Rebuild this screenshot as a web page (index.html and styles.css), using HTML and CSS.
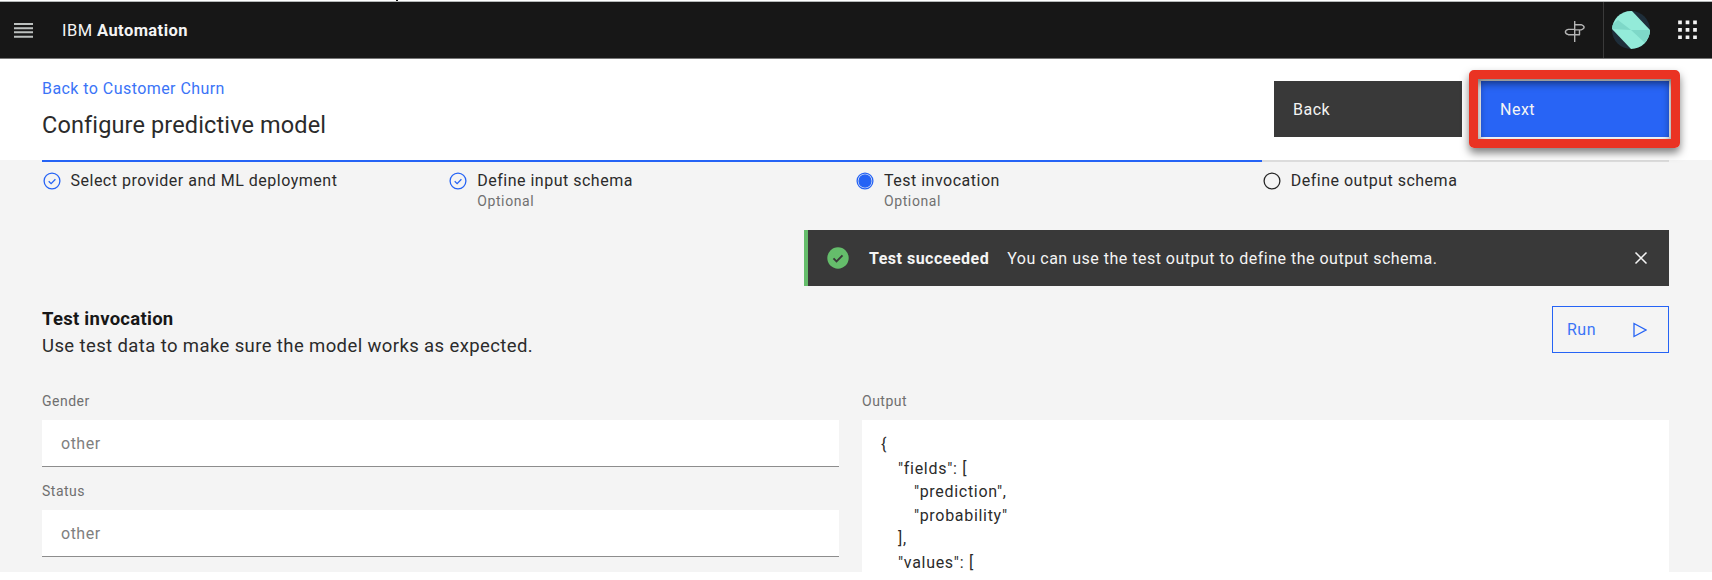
FILE: index.html
```
<!DOCTYPE html>
<html lang="en">
<head>
<meta charset="utf-8">
<title>Configure predictive model</title>
<link rel="stylesheet" href="styles.css">
</head>
<body>
<i class="speck"></i>
<header class="topbar">
  <svg class="menu" width="20" height="18" viewBox="0 0 20 18"><path d="M0 3h19M0 7.300h19M0 11.300h19M0 15.700h19" stroke="#bcc0bf" stroke-width="1.900"/></svg>
  <div class="brand">IBM <b>Automation</b></div>
  <div class="tools">
    <svg class="sign" width="22" height="24" viewBox="0 0 22 24" fill="none" stroke="#b4b4b4" stroke-width="1.400" stroke-linejoin="round"><path d="M11.700 3v21M11.700 6.700h6.500q2.900 1 2.900 2.600t-2.900 2.600h-6.500M11.700 11.400H5.300Q2.400 12.300 2.400 14t2.900 2.700h11.200v-4.800"/></svg>
    <div class="user"><svg width="38" height="38" viewBox="0 0 38 38"><defs><clipPath id="disc"><circle cx="19" cy="19" r="19"/></clipPath></defs><g clip-path="url(#disc)"><path fill="#1e2e3a" d="M0 0h38v38H0z"/><path fill="#93ebd9" d="M0 0h20l18 19v19H19L0 18z"/><path fill="#7ed8c8" d="M19 19 6 9 0 14v4zM19 19h19v4l-5 9z"/></g></svg></div>
    <svg class="apps" width="20" height="20" viewBox="0 0 20 20"><path d="M2 .5V20M9.500.5V20M17 .5V20" stroke="#f4f4f4" stroke-width="3.700" stroke-dasharray="3.700 3.750"/></svg>
  </div>
</header>
<section class="heading">
  <div class="titles"><a class="crumb">Back to Customer Churn</a><h1>Configure predictive model</h1></div>
  <div class="actions"><button class="btn back">Back</button><button class="btn next">Next<i class="frame"></i></button></div>
</section>
<main class="content">
  <ol class="steps">
    <li class="step"><svg class="dot" viewBox="0 0 18 18"><circle cx="9" cy="9" r="7.900"/><path d="m5.700 9.300 2.400 2.300 4.300-4.300"/></svg><p class="name">Select provider and ML deployment</p></li>
    <li class="step"><svg class="dot" viewBox="0 0 18 18"><circle cx="9" cy="9" r="7.900"/><path d="m5.700 9.300 2.400 2.300 4.300-4.300"/></svg><div><p class="name">Define input schema</p><p class="opt">Optional</p></div></li>
    <li class="step"><svg class="dot" viewBox="0 0 18 18"><circle cx="9" cy="9" r="7.900"/><circle cx="9" cy="9" r="6" class="fill"/></svg><div><p class="name">Test invocation</p><p class="opt">Optional</p></div></li>
    <li class="step todo"><svg class="dot" viewBox="0 0 18 18"><circle cx="9" cy="9" r="7.900"/></svg><p class="name">Define output schema</p></li>
  </ol>
  <div class="toast">
    <svg width="22" height="22" viewBox="0 0 22 22"><circle cx="11" cy="11" r="10.700" fill="#65bd6b"/><path d="m6.500 11.300 3 3 6-6" fill="none" stroke="#393939" stroke-width="1.900"/></svg>
    <b>Test succeeded</b><p>You can use the test output to define the output schema.</p>
    <svg class="close" width="14" height="14" viewBox="0 0 14 14"><path d="m1.500 1.500 11 11m0-11-11 11" stroke="#f4f4f4" stroke-width="1.500"/></svg>
  </div>
  <div class="intro">
    <div><h2>Test invocation</h2><p class="sub">Use test data to make sure the model works as expected.</p></div>
    <button class="run">Run<svg width="14" height="16" viewBox="0 0 14 16"><path d="M1 1.500v13L13 8z" fill="none" stroke="#2563f5" stroke-width="1.300"/></svg></button>
  </div>
  <div class="panes">
    <div class="form">
      <label class="label">Gender</label><div class="input">other</div>
      <label class="label">Status</label><div class="input">other</div>
    </div>
    <div class="out">
      <label class="label">Output</label>
      <div class="code"><p>{</p><p class="i1">"fields": [</p><p class="i2">"prediction",</p><p class="i2">"probability"</p><p class="i1">],</p><p class="i1">"values": [</p></div>
    </div>
  </div>
</main>
</body>
</html>
```
FILE: styles.css
```
* { box-sizing: border-box; margin: 0; padding: 0; }
body { width: 1712px; height: 580px; overflow: hidden; background: #fff; color: #2b2b2b; font-family: Roboto, "Noto Sans", sans-serif; font-size: 16px; letter-spacing: .5px; padding-top: 1px; }
button { font: inherit; letter-spacing: inherit; border: 0; text-align: left; }
.speck { position: absolute; left: 396px; top: 0; width: 2px; height: 1px; background: #111; }
.topbar { height: 58px; background: #171717; border-top: 1px solid #b5b8b8; border-bottom: 1px solid #777; display: flex; align-items: center; padding: 0 14px; color: #f4f4f4; }
.brand { margin-left: 28px; font-size: 16.500px; letter-spacing: .43px; }
.brand b { font-weight: 700; }
.tools { margin-left: auto; display: flex; align-items: center; height: 100%; }
.user { margin-left: 18px; padding-left: 8px; height: 100%; border-left: 1px solid #3a3a3a; display: flex; align-items: center; }
.apps { margin-left: 28px; }
.heading { height: 101px; padding: 0 43px 0 42px; display: flex; justify-content: space-between; }
.titles { padding-top: 19px; }
.crumb { display: block; color: #3b74f7; line-height: 22px; letter-spacing: .44px; }
h1 { font-weight: 400; font-size: 23.500px; line-height: 30px; margin-top: 10px; letter-spacing: .13px; }
.actions { display: flex; gap: 19px; padding-top: 22px; }
.btn { width: 188px; height: 56px; padding-left: 19px; color: #f4f4f4; }
.back { background: #393939; }
.next { background: #2864f5; position: relative; }
.frame { position: absolute; left: -12px; top: -11px; width: 211px; height: 78px; border: 9px solid #ea3323; border-radius: 5px; box-shadow: 0 5px 9px rgba(0, 0, 0, .5), inset 0 4px 9px rgba(0, 0, 0, .55); }
.content { height: 412px; background: #f4f4f4; padding: 0 43px 0 42px; overflow: hidden; }
.steps { list-style: none; display: grid; grid-template-columns: repeat(4, 1fr); height: 70px; }
.step { border-top: 2px solid #2563f5; display: flex; gap: 10px; padding: 9px 0 0 .5px; }
.todo { border-color: #dcdcdc; }
.dot { width: 18px; height: 18px; margin-top: 1px; fill: none; stroke: #2563f5; stroke-width: 1.300; }
.todo .dot { stroke: #262626; }
.dot .fill { fill: #2563f5; }
.name { line-height: 20px; }
.opt { font-size: 14px; line-height: 20px; color: #707070; letter-spacing: .6px; }
.toast { margin-left: auto; width: 865px; height: 56px; background: #393939; border-left: 4px solid #65bd6b; color: #f4f4f4; display: flex; align-items: center; padding: 0 21px 0 19px; }
.toast b { margin-left: 20px; }
.toast p { margin-left: 18px; }
.close { margin-left: auto; }
.intro { display: flex; justify-content: space-between; margin-top: 20px; height: 83px; }
h2 { font-size: 18.500px; font-weight: 700; line-height: 27px; letter-spacing: .27px; color: #171717; }
.sub { font-size: 18.500px; line-height: 27px; letter-spacing: .39px; }
.run { width: 117px; height: 47px; border: 1px solid #2563f5; background: transparent; color: #3b74f7; padding: 0 21px 0 14px; display: flex; justify-content: space-between; align-items: center; }
.panes { display: grid; grid-template-columns: 797px 807px; gap: 23px; }
.label { display: block; height: 31px; line-height: 24px; font-size: 14px; color: #6f6f6f; }
.input { height: 47px; margin-bottom: 12px; background: #fff; border-bottom: 1px solid #8d8d8d; padding-left: 19px; line-height: 48px; color: #808080; }
.code { background: #fff; height: 161px; padding: 13px 19px; line-height: 23.600px; letter-spacing: .7px; }
.i1 { padding-left: 17px; }
.i2 { padding-left: 33px; }
```
